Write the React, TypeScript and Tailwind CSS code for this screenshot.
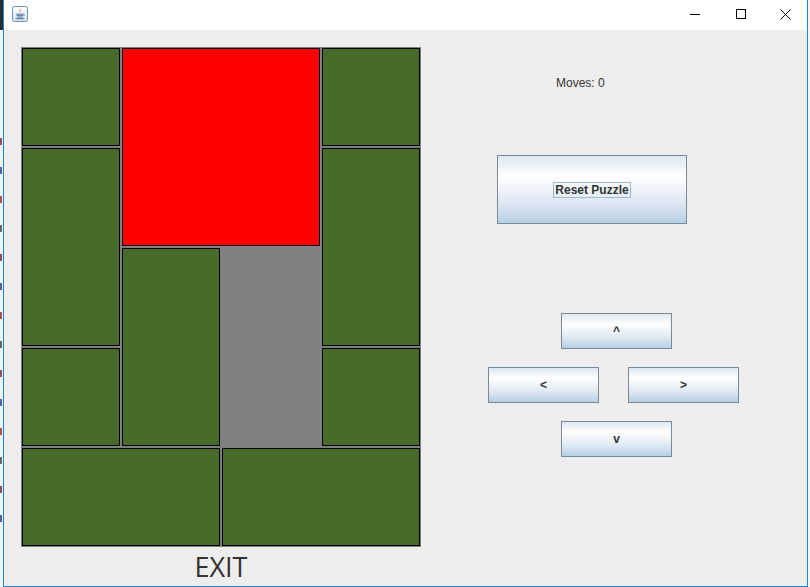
import React from "react";

const GREEN = "bg-[#486b2a]";

type Tile = { c: number; r: number; w: number; h: number; red?: boolean };

const tiles: Tile[] = [
  { c: 1, r: 1, w: 1, h: 1 },
  { c: 2, r: 1, w: 2, h: 2, red: true },
  { c: 4, r: 1, w: 1, h: 1 },
  { c: 1, r: 2, w: 1, h: 2 },
  { c: 4, r: 2, w: 1, h: 2 },
  { c: 2, r: 3, w: 1, h: 2 },
  { c: 1, r: 4, w: 1, h: 1 },
  { c: 4, r: 4, w: 1, h: 1 },
  { c: 1, r: 5, w: 2, h: 1 },
  { c: 3, r: 5, w: 2, h: 1 },
];

const marks = ["#7a1f4a", "#2f3a8a", "#a01f2a", "#444", "#7a1f4a", "#2f3a8a", "#a01f2a", "#444", "#7a1f4a", "#2f3a8a", "#a01f2a", "#444", "#7a1f4a", "#2f3a8a"];

function JavaIcon() {
  return (
    <svg width="16" height="16" viewBox="0 0 16 16">
      <defs>
        <linearGradient id="jg" x1="0" y1="0" x2="0" y2="1">
          <stop offset="0" stopColor="#ffffff" />
          <stop offset="1" stopColor="#d6e2f0" />
        </linearGradient>
      </defs>
      <rect x="0.5" y="0.5" width="15" height="15" rx="2" fill="url(#jg)" stroke="#6f8fbb" />
      <path d="M8.8 1.8c1.4 1.5-1.8 2.5-0.7 4.1 0.3 0.4 1 0.7 1 0.7s-2.1-0.7-1.8-2.1c0.3-1.2 2.4-1.5 1.5-2.7z" fill="#e76f00" />
      <path d="M10.2 3.9c-1.6 0.9-1 1.7-0.6 2.3-0.7-0.3-1.3-1 -0.1-1.7 0.4-0.2 0.7-0.5 0.7-0.6z" fill="#e76f00" />
      <path d="M4.3 8.1h7M4.6 9.6h6.4M5 11.1h5.6" stroke="#4a76a0" strokeWidth="1" fill="none" />
      <path d="M11.2 8.2c1.4-0.2 1.8 1 0.2 1.8" stroke="#4a76a0" strokeWidth="0.9" fill="none" />
      <path d="M3.6 12.7h8.8" stroke="#4a76a0" strokeWidth="1" />
    </svg>
  );
}

function MetalButton({
  label,
  className,
  focused,
}: {
  label: string;
  className: string;
  focused?: boolean;
}) {
  return (
    <div
      className={
        "flex items-center justify-center border border-[#7a8a99] bg-[linear-gradient(to_bottom,#dde8f3_0%,#ffffff_30%,#dde8f3_70%,#b8cfe5_100%)] " +
        className
      }
    >
      <span
        className={
          "text-[12px] font-bold leading-[14px] text-[#333333] " +
          (focused ? "border border-[#a3b8cc] px-[1px]" : "")
        }
        style={{ fontFamily: '"Liberation Sans", Arial, sans-serif' }}
      >
        {label}
      </span>
    </div>
  );
}

export default function App() {
  return (
    <div className="flex h-[587px] w-[810px] overflow-hidden bg-[#eeeeee]">
      {/* desktop strip on the left */}
      <div className="flex w-[3px] flex-col">
        <div className="h-[30px] bg-[#2b2b2b]" />
        <div className="flex flex-1 flex-col gap-[22px] bg-[#f4f4f4] pt-[108px]">
          {marks.map((m, i) => (
            <div key={i} className="h-[7px] w-[2px] opacity-80" style={{ backgroundColor: m }} />
          ))}
        </div>
      </div>

      {/* window */}
      <div className="flex h-[587px] w-[805px] flex-col border-b border-l border-r border-[#1c87d9]">
        {/* title bar */}
        <div className="flex h-[30px] items-start bg-white">
          <div className="ml-[8px] mt-[6px]">
            <JavaIcon />
          </div>
          <div className="ml-auto flex h-[30px]">
            <div className="flex h-[30px] w-[46px] items-center justify-center">
              <div className="mt-[-1px] h-[1px] w-[10px] bg-black" />
            </div>
            <div className="flex h-[30px] w-[45px] items-center justify-center">
              <div className="mt-[-2px] h-[10px] w-[10px] border border-black" />
            </div>
            <div className="flex h-[30px] w-[44px] items-center justify-center">
              <svg width="11" height="11" viewBox="0 0 11 11" className="mt-[-2px]">
                <path d="M0.5 0.5L10.5 10.5M10.5 0.5L0.5 10.5" stroke="#000" strokeWidth="1" />
              </svg>
            </div>
          </div>
        </div>

        {/* content */}
        <div className="flex flex-1 bg-[#eeeeee] pl-[17px] pt-[17px]">
          <div className="flex w-[400px] flex-col">
            <div className="grid h-[500px] w-[400px] grid-cols-[repeat(4,98px)] grid-rows-[repeat(5,98px)] gap-[2px] bg-[#808080] p-[1px]">
              {tiles.map((t, i) => (
                <div
                  key={i}
                  className={"border border-black " + (t.red ? "bg-[#ff0000]" : GREEN)}
                  style={{
                    gridColumn: `${t.c} / span ${t.w}`,
                    gridRow: `${t.r} / span ${t.h}`,
                  }}
                />
              ))}
            </div>
            <div
              className="mt-[4px] text-center text-[27px] leading-[32px] text-[#333333]"
              style={{ fontFamily: '"Open Sans", "Noto Sans", sans-serif' }}
            >
              EXIT
            </div>
          </div>

          <div className="flex flex-1 flex-col">
            <div
              className="ml-[135px] mt-[29px] text-[12px] leading-[14px] text-[#333333]"
              style={{ fontFamily: '"Liberation Sans", Arial, sans-serif' }}
            >
              Moves: 0
            </div>
            <MetalButton
              label="Reset Puzzle"
              focused
              className="ml-[76px] mt-[65px] h-[69px] w-[190px]"
            />
            <div className="ml-[67px] mt-[89px] flex flex-col gap-[18px]">
              <MetalButton label="^" className="ml-[73px] h-[36px] w-[111px]" />
              <div className="flex gap-[29px]">
                <MetalButton label="<" className="h-[36px] w-[111px]" />
                <MetalButton label=">" className="h-[36px] w-[111px]" />
              </div>
              <MetalButton label="v" className="ml-[73px] h-[36px] w-[111px]" />
            </div>
          </div>
        </div>
      </div>
      <div className="w-[2px] bg-[#f4f4f4]" />
    </div>
  );
}
